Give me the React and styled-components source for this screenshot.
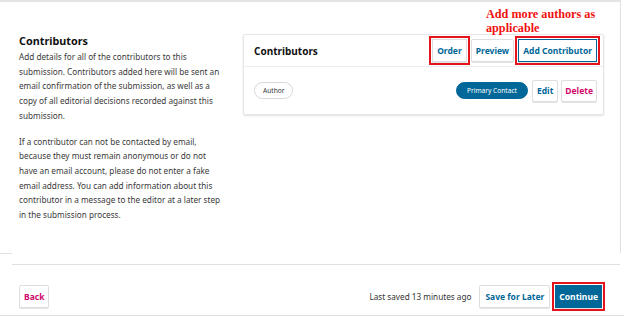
import React from 'react'
import styled, { createGlobalStyle, css } from 'styled-components'

const GlobalStyle = createGlobalStyle`
  html, body {
    margin: 0;
    padding: 0;
    background: #fff;
  }
  body {
    font-family: "Noto Sans", "Open Sans", sans-serif;
    color: #222;
  }
`

const BLUE = '#006798'
const PINK = '#d00a6c'
const MARK = '#e3141b'

const Page = styled.div`
  width: 624px;
  height: 316px;
  box-sizing: border-box;
  display: flex;
  flex-direction: column;
  border-bottom: 1px solid #e1e1e1;
  overflow: hidden;
`

const Section = styled.section`
  width: 621px;
  height: 253px;
  box-sizing: border-box;
  flex-shrink: 0;
  border-top: 2px solid #e4e4e4;
  border-right: 1px solid #e1e1e1;
  display: flex;
  align-items: flex-start;
  gap: 19px;
  padding: 31px 0 0 19px;
`

const SectionRule = styled.div`
  width: 12px;
  height: 1px;
  background: #e1e1e1;
  flex-shrink: 0;
`

const Description = styled.div`
  width: 205px;
  flex-shrink: 0;
`

const Heading = styled.h2`
  margin: 0 0 2px;
  font-size: 10.8px;
  font-weight: 700;
  line-height: 15px;
  color: #111;
`

const Para = styled.p`
  margin: 0 0 11px;
  font-size: 8.2px;
  line-height: 14.7px;
  color: #3a3a3a;
`

const CardWrap = styled.div`
  position: relative;
  width: 361px;
  margin-top: 1px;
`

const Note = styled.div`
  position: absolute;
  left: 243px;
  top: -27px;
  font-family: "Liberation Serif", "Times New Roman", serif;
  font-weight: 700;
  font-size: 12.2px;
  line-height: 14px;
  color: #f01010;
  white-space: nowrap;
`

const Card = styled.div`
  border: 1px solid #e6e6e6;
  border-radius: 2px;
  box-shadow: 0 1px 2px rgba(0, 0, 0, 0.12);
  background: #fff;
`

const CardHeader = styled.div`
  height: 31px;
  display: flex;
  align-items: center;
  justify-content: space-between;
  padding: 0 6px 0 10px;
  border-bottom: 1px solid #ececec;
`

const CardTitle = styled.div`
  font-size: 10px;
  font-weight: 700;
  color: #111;
`

const Actions = styled.div`
  display: flex;
  align-items: center;
  gap: ${p => p.gap || 4}px;
`

const Button = styled.button`
  height: ${p => p.h || 23}px;
  box-sizing: border-box;
  padding: 0 ${p => p.px || 4}px;
  font-family: inherit;
  font-size: 8.5px;
  font-weight: 700;
  border-radius: 2px;
  border: 1px solid #dedede;
  background: #fff;
  color: ${BLUE};
  box-shadow: 0 1px 0 #e4e4e4;
  cursor: pointer;
  ${p => p.tone === 'pink' && css`color: ${PINK};`}
  ${p => p.tone === 'outline' && css`border-color: ${BLUE};`}
  ${p => p.tone === 'primary' && css`
    background: ${BLUE};
    border-color: ${BLUE};
    color: #fff;
  `}
  ${p => p.marked && css`
    border-radius: 0;
    outline: 2px solid ${MARK};
    outline-offset: 1px;
  `}
`

const Row = styled.div`
  height: 47px;
  display: flex;
  align-items: center;
  justify-content: space-between;
  padding: 0 6px 0 10px;
`

const Pill = styled.span`
  display: inline-flex;
  align-items: center;
  height: 17px;
  box-sizing: border-box;
  padding: 0 ${p => (p.primary ? 10 : 8)}px;
  border-radius: 9px;
  font-size: 6.6px;
  border: 1px solid ${p => (p.primary ? BLUE : '#d8d8d8')};
  background: ${p => (p.primary ? BLUE : '#fff')};
  color: ${p => (p.primary ? '#fff' : '#333')};
  margin-right: ${p => (p.primary ? 1 : 0)}px;
`

const Footer = styled.footer`
  margin: 10px 0 0 12px;
  width: 608px;
  flex: 1;
  box-sizing: border-box;
  border-top: 1px solid #e1e1e1;
  display: flex;
  align-items: flex-start;
  justify-content: space-between;
  padding: 20px 18px 0 7px;
`

const Saved = styled.span`
  font-size: 8.2px;
  color: #333;
  margin-right: 3px;
`

export default function App() {
  return (
    <Page>
      <GlobalStyle />
      <Section>
        <Description>
          <Heading>Contributors</Heading>
          <Para>
            Add details for all of the contributors to this submission.
            Contributors added here will be sent an email confirmation of the
            submission, as well as a copy of all editorial decisions recorded
            against this submission.
          </Para>
          <Para>
            If a contributor can not be contacted by email, because they must
            remain anonymous or do not have an email account, please do not
            enter a fake email address. You can add information about this
            contributor in a message to the editor at a later step in the
            submission process.
          </Para>
        </Description>
        <CardWrap>
          <Note>
            Add more authors as
            <br />
            applicable
          </Note>
          <Card>
            <CardHeader>
              <CardTitle>Contributors</CardTitle>
              <Actions>
                <Button marked>Order</Button>
                <Button>Preview</Button>
                <Button tone="outline" marked>Add Contributor</Button>
              </Actions>
            </CardHeader>
            <Row>
              <Pill>Author</Pill>
              <Actions gap={3}>
                <Pill primary>Primary Contact</Pill>
                <Button h={22}>Edit</Button>
                <Button h={22} px={3} tone="pink">Delete</Button>
              </Actions>
            </Row>
          </Card>
        </CardWrap>
      </Section>
      <SectionRule />
      <Footer>
        <Button tone="pink">Back</Button>
        <Actions gap={5}>
          <Saved>Last saved 13 minutes ago</Saved>
          <Button px={5}>Save for Later</Button>
          <Button tone="primary" px={3} marked>Continue</Button>
        </Actions>
      </Footer>
    </Page>
  )
}
